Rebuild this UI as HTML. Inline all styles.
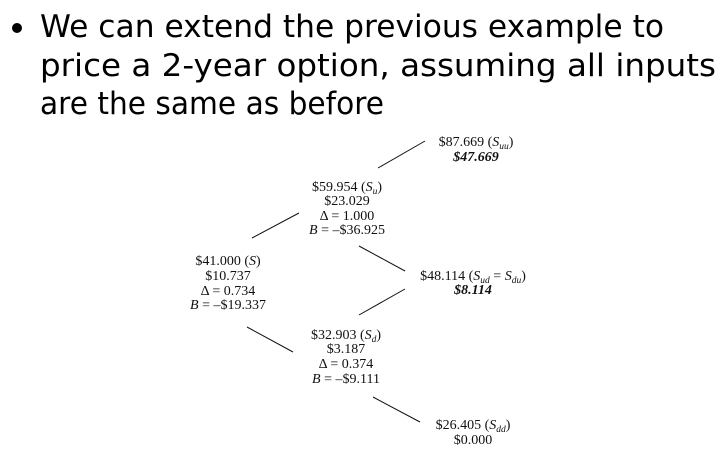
<!DOCTYPE html>
<html><head><meta charset="utf-8"><style>
html,body{margin:0;padding:0;background:#fff;width:727px;height:450px;overflow:hidden}
svg{display:block}
.h{font-family:"DejaVu Sans","Liberation Sans",sans-serif;font-size:31.5px;fill:#000}
.t{font-family:"Liberation Serif",serif;font-size:14px;fill:#111;text-anchor:middle}
.b{font-weight:bold;font-style:italic}
.i{font-style:italic}
.s{font-size:9.5px;font-style:italic}
</style></head><body>
<svg width="727" height="450" viewBox="0 0 727 450">
<circle cx="17" cy="28" r="5" fill="#000"/>
<text class="h" x="40" y="37" textLength="624" lengthAdjust="spacingAndGlyphs">We can extend the previous example to</text>
<text class="h" x="40" y="76" textLength="676" lengthAdjust="spacingAndGlyphs">price a 2-year option, assuming all inputs</text>
<text class="h" x="40" y="114" textLength="344" lengthAdjust="spacingAndGlyphs">are the same as before</text>
<g stroke="#111" stroke-width="1">
<line x1="378" y1="168" x2="425" y2="141"/>
<line x1="252" y1="238" x2="299" y2="213"/>
<line x1="359" y1="246" x2="405" y2="271"/>
<line x1="359" y1="315" x2="405" y2="289"/>
<line x1="247" y1="327" x2="293" y2="352"/>
<line x1="373" y1="397" x2="420" y2="422"/>
</g>
<text class="t" x="476" y="146">$87.669 (<tspan class="i">S</tspan><tspan class="s" dy="3">uu</tspan><tspan dy="-3">)</tspan></text>
<text class="t b" x="476" y="161">$47.669</text>
<text class="t" x="347" y="191">$59.954 (<tspan class="i">S</tspan><tspan class="s" dy="3">u</tspan><tspan dy="-3">)</tspan></text>
<text class="t" x="347" y="205">$23.029</text>
<text class="t" x="347" y="220">Δ = 1.000</text>
<text class="t" x="347" y="234"><tspan class="i">B</tspan> = –$36.925</text>
<text class="t" x="228" y="265">$41.000 (<tspan class="i">S</tspan>)</text>
<text class="t" x="228" y="280">$10.737</text>
<text class="t" x="228" y="295">Δ = 0.734</text>
<text class="t" x="228" y="309"><tspan class="i">B</tspan> = –$19.337</text>
<text class="t" x="473" y="280">$48.114 (<tspan class="i">S</tspan><tspan class="s" dy="3">ud</tspan><tspan dy="-3"> = </tspan><tspan class="i">S</tspan><tspan class="s" dy="3">du</tspan><tspan dy="-3">)</tspan></text>
<text class="t b" x="473" y="294">$8.114</text>
<text class="t" x="346" y="339">$32.903 (<tspan class="i">S</tspan><tspan class="s" dy="3">d</tspan><tspan dy="-3">)</tspan></text>
<text class="t" x="346" y="353">$3.187</text>
<text class="t" x="346" y="368">Δ = 0.374</text>
<text class="t" x="346" y="383"><tspan class="i">B</tspan> = –$9.111</text>
<text class="t" x="473" y="429">$26.405 (<tspan class="i">S</tspan><tspan class="s" dy="3">dd</tspan><tspan dy="-3">)</tspan></text>
<text class="t" x="473" y="444">$0.000</text>
</svg>
</body></html>
